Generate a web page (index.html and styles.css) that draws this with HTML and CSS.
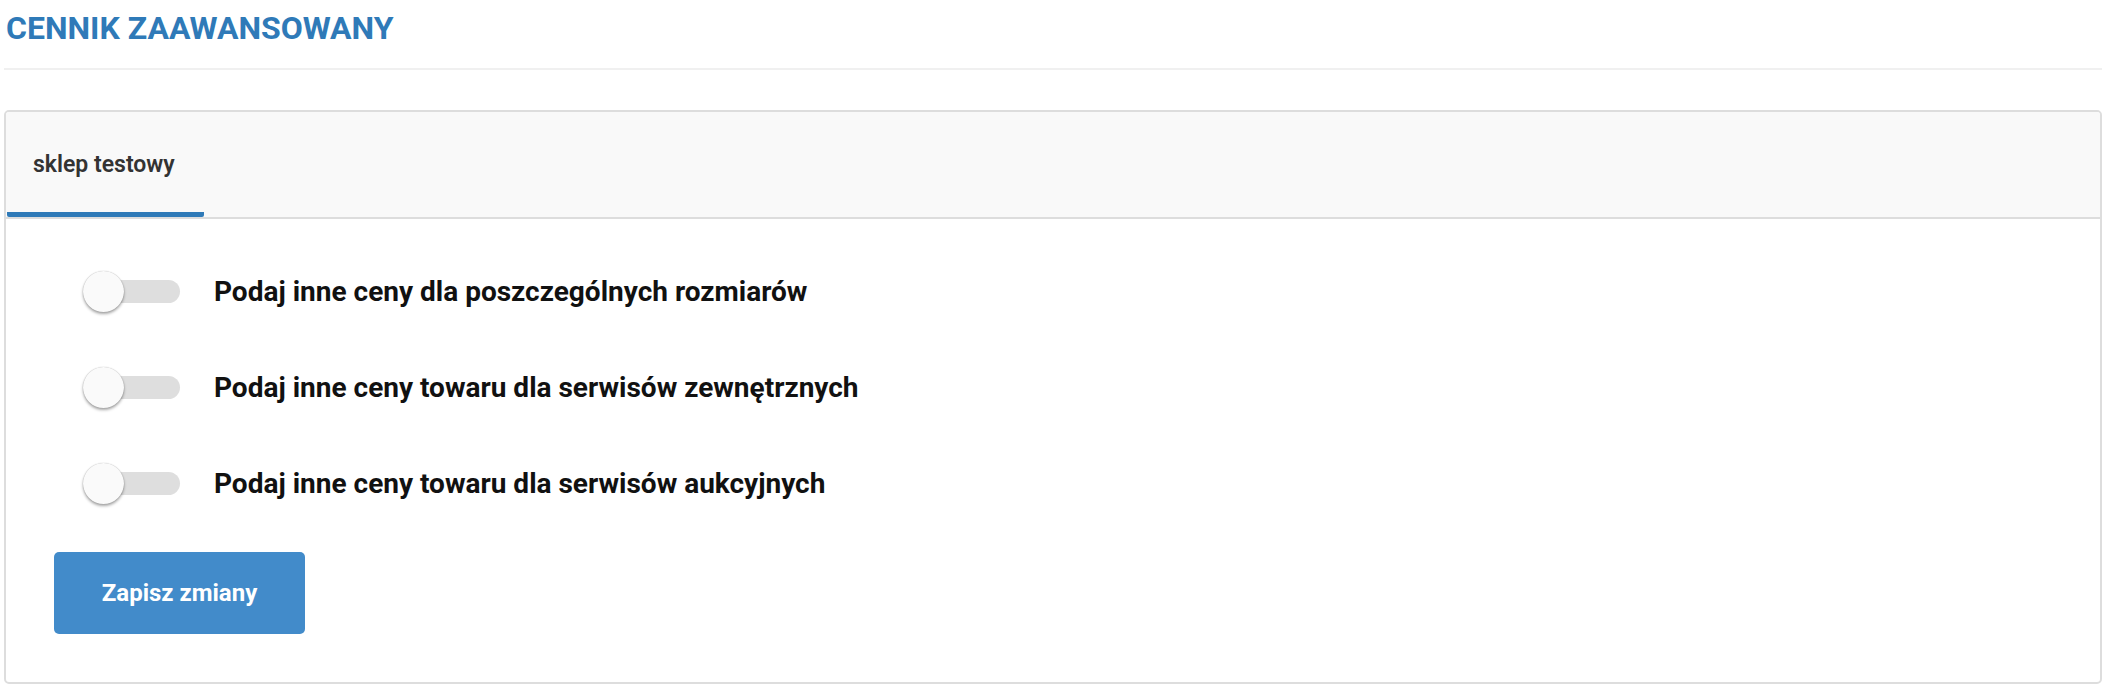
FILE: index.html
```html
<!DOCTYPE html>
<html lang="pl">
<head>
<meta charset="utf-8">
<link rel="stylesheet" href="styles.css">
</head>
<body>
<div class="page">
  <h3 class="title">CENNIK ZAAWANSOWANY</h3>
  <div class="panel">
    <div class="tabs">
      <div class="tab active">sklep testowy</div>
    </div>
    <div class="body">
      <div class="row">
        <span class="toggle"><span class="knob"></span></span>
        <span class="label">Podaj inne ceny dla poszczególnych rozmiarów</span>
      </div>
      <div class="row">
        <span class="toggle"><span class="knob"></span></span>
        <span class="label">Podaj inne ceny towaru dla serwisów zewnętrznych</span>
      </div>
      <div class="row">
        <span class="toggle"><span class="knob"></span></span>
        <span class="label">Podaj inne ceny towaru dla serwisów aukcyjnych</span>
      </div>
      <button class="btn">Zapisz zmiany</button>
    </div>
  </div>
</div>
</body>
</html>
```
FILE: styles.css
```css
html, body { margin: 0; padding: 0; background: #fff; }
body { font-family: Roboto, "Liberation Sans", sans-serif; color: #333; }
.page { padding: 0 8px 0 4px; }
.title {
  margin: 0;
  padding: 10px 0 0 2px;
  height: 70px;
  box-sizing: border-box;
  font-size: 32px;
  line-height: 36px;
  font-weight: 700;
  color: #2f7ab8;
  border-bottom: 2px solid #f0f0f0;
}
.panel {
  margin-top: 40px;
  border: 2px solid #ddd;
  border-radius: 5px;
  overflow: hidden;
}
.tabs {
  display: flex;
  background: #f9f9f9;
  height: 105px;
  border-bottom: 2px solid #ddd;
  padding-left: 1px;
}
.tab {
  width: 197px;
  box-sizing: border-box;
  padding: 39px 0 0 26px;
  font-size: 23px;
  line-height: 27px;
  font-weight: 600;
  color: #333;
  border-bottom: 5px solid #2f7ab8;
  border-radius: 0 0 2px 2px;
}
.body {
  padding: 52px 0 48px 0;
  display: flex;
  flex-direction: column;
  align-items: flex-start;
}
.row {
  display: flex;
  align-items: center;
  height: 40px;
  margin-bottom: 56px;
  padding-left: 77px;
}
.row:nth-child(3) { margin-bottom: 49px; }
.toggle {
  position: relative;
  width: 97px;
  height: 40px;
  display: flex;
  align-items: center;
}
.toggle::before {
  content: "";
  position: absolute;
  left: 18px;
  right: 0;
  top: 9px;
  height: 23px;
  border-radius: 12px;
  background: #dedede;
}
.knob {
  position: absolute;
  left: 0;
  top: 0;
  width: 41px;
  height: 41px;
  border-radius: 50%;
  background: #fafafa;
  box-shadow: 0 2px 3px rgba(0,0,0,0.35), 0 0 1px rgba(0,0,0,0.3);
}
.label {
  margin-left: 34px;
  font-size: 28px;
  font-weight: 700;
  color: #111;
}
.btn {
  margin-left: 48px;
  width: 251px;
  height: 82px;
  border: 0;
  border-radius: 5px;
  background: #428bca;
  color: #fff;
  font-family: Roboto, "Liberation Sans", sans-serif;
  font-size: 24px;
  font-weight: 700;
  cursor: pointer;
}
```
